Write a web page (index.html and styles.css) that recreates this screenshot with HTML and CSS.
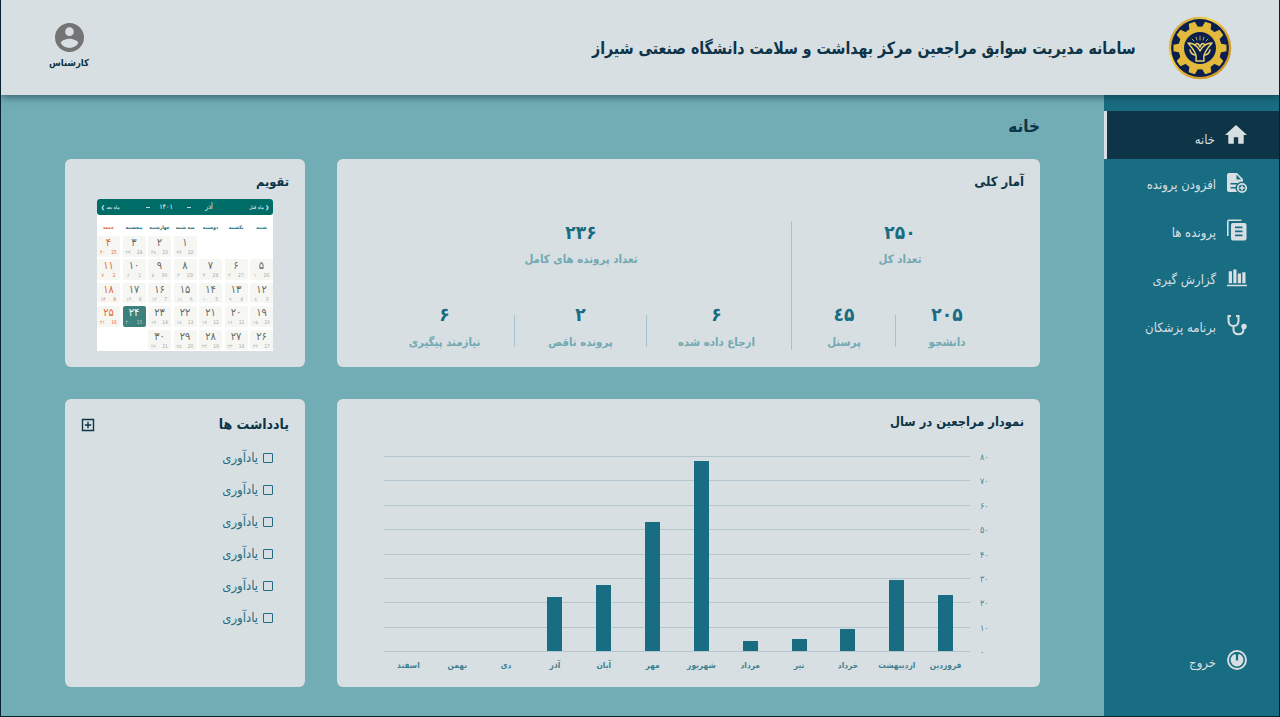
FILE: index.html
```
<!DOCTYPE html>
<html lang="fa" dir="rtl">
<head>
<meta charset="utf-8">
<title>سامانه مدیریت سوابق مراجعین</title>
<link rel="stylesheet" href="styles.css">
</head>
<body>
<div class="app">
  <header class="header">
    <div class="brand">
      <svg class="logo" viewBox="-32 -32 64 64">
        <defs>
          <linearGradient id="gold" x1="0" y1="0" x2="1" y2="1">
            <stop offset="0" stop-color="#b8862a"/><stop offset=".35" stop-color="#f2d552"/>
            <stop offset=".6" stop-color="#d9a52c"/><stop offset="1" stop-color="#c98f22"/>
          </linearGradient>
          <path id="tooth" d="M-4.6-20 L-3.2-26.5 H3.2 L4.6-20z"/>
        </defs>
        <circle r="31.3" fill="url(#gold)"/>
        <circle r="28.9" fill="#0b1f4d"/>
        <g fill="#e3b93c">
          <circle r="21.500"/>
          <use href="#tooth" transform="rotate(18)"/><use href="#tooth" transform="rotate(54)"/>
          <use href="#tooth" transform="rotate(90)"/><use href="#tooth" transform="rotate(126)"/>
          <use href="#tooth" transform="rotate(162)"/><use href="#tooth" transform="rotate(198)"/>
          <use href="#tooth" transform="rotate(234)"/><use href="#tooth" transform="rotate(270)"/>
          <use href="#tooth" transform="rotate(306)"/><use href="#tooth" transform="rotate(342)"/>
        </g>
        <circle r="16" fill="#0b1f4d"/>
        <g fill="none" stroke="#e6cf6a" stroke-width="1.500" stroke-linecap="round" stroke-linejoin="round">
          <path d="M-4 13 C-3 7-5 3-12-5 C-7-5-3-3 0 3 C3-3 7-5 12-5 C5 3 3 7 4 13z"/>
          <path d="M-10 2 C-9 6-6 7-4 7 M10 2 C9 6 6 7 4 7 M-5-3 C-3-6-1-4 0-1 C1-4 3-6 5-3"/>
          <path stroke-width=".8" d="M0-8V-12 M-3-8L-4-11 M3-8L4-11 M-6-7L-8-9 M6-7L8-9"/>
        </g>
      </svg>
      <h1 class="title"><span>سامانه مدیریت سوابق مراجعین مرکز بهداشت و سلامت دانشگاه صنعتی شیراز</span></h1>
    </div>
    <div class="user">
      <svg class="avatar" viewBox="2 2 20 20"><path fill="#747474" d="M12 2C6.48 2 2 6.48 2 12s4.48 10 10 10 10-4.48 10-10S17.52 2 12 2zm0 3c1.66 0 3 1.34 3 3s-1.34 3-3 3-3-1.34-3-3 1.34-3 3-3zm0 14.2c-2.5 0-4.71-1.28-6-3.22.03-1.99 4-3.08 6-3.08 1.99 0 5.97 1.09 6 3.08-1.29 1.94-3.5 3.22-6 3.22z"/></svg>
      <span class="user-name">کارشناس</span>
    </div>
  </header>
  <div class="body">
    <nav class="sidebar">
      <a class="item active"><svg viewBox="2 2 20 20"><path d="M10 20v-6h4v6h5v-8h3L12 3 2 12h3v8z"/></svg><span>خانه</span></a>
      <a class="item"><svg viewBox="0 0 22 22"><path fill-rule="evenodd" d="M3 1h8l6 6v13H3a2 2 0 0 1-2-2V3a2 2 0 0 1 2-2zm7.500 1.800v4.700h4.700zM4.500 11v1.500h7V11zm0 4v1.500h7V15z"/><circle cx="16" cy="16" r="6.500" fill="#196d82"/><circle cx="16" cy="16" r="4.200" fill="none" stroke="#d8dfe3" stroke-width="1.800"/><path d="M15.200 13.500h1.600v1.700h1.700v1.600h-1.700v1.700h-1.600v-1.700h-1.700v-1.600h1.700z"/></svg><span>افزودن پرونده</span></a>
      <a class="item"><svg viewBox="0 0 22 22"><path d="M1 17V2.500a2 2 0 0 1 2-2h12.500v1.600H2.600V17z"/><path fill-rule="evenodd" d="M7 4h11.500a2 2 0 0 1 2 2v13.500a2 2 0 0 1-2 2H7a2 2 0 0 1-2-2V6a2 2 0 0 1 2-2zM9 7.500v1.700h7.500V7.500zm0 4v1.700h7.500v-1.700zm0 4v1.700h7.500v-1.700z"/></svg><span>پرونده ها</span></a>
      <a class="item"><svg viewBox="0 0 22 22"><path d="M1 17.700h20v1.600H1zM2.700 4.300H6v12H2.700zM7.300 2.500h3.200v13.800H7.300zM11.800 6.500H15v9.800h-3.200zM16.300 5.300h3.200v11h-3.200z"/></svg><span>گزارش گیری</span></a>
      <a class="item"><svg viewBox="0 0 22 22"><path fill="none" stroke="#d8dfe3" stroke-width="2" d="M5 2H2.500v4.500C2.500 10 4.500 12 7.500 12s5-2 5-5.500V2H10M7.500 12v3.500c0 3 2 4.800 5 4.800s5-2 5-5V14"/><circle cx="18" cy="12.500" r="2.700"/></svg><span>برنامه پزشکان</span></a>
      <a class="item logout"><svg viewBox="0 0 22 22"><circle cx="11" cy="11" r="9" fill="none" stroke="#d8dfe3" stroke-width="1.900"/><circle cx="11" cy="11" r="6.400"/><path fill="#196d82" d="M8.800 3h4.400v2.500H8.800z"/><path fill="#196d82" d="M9.900 4h2.200v7.500H9.900z"/></svg><span>خروج</span></a>
    </nav>
    <main class="main">
      <h2 class="page-title">خانه</h2>
      <div class="grid">
        <section class="card">
          <h3>آمار کلی</h3>
          <div class="stats">
            <div class="group people">
              <div class="stat"><b>۲۵۰</b><span>تعداد کل</span></div>
              <div class="row">
                <div class="stat"><b>۲۰۵</b><span>دانشجو</span></div>
                <i></i>
                <div class="stat"><b>٤۵</b><span>پرسنل</span></div>
              </div>
            </div>
            <div class="group files">
              <div class="stat"><b>۲۳۶</b><span>تعداد پرونده های کامل</span></div>
              <div class="row">
                <div class="stat"><b>۶</b><span>ارجاع داده شده</span></div>
                <i></i>
                <div class="stat"><b>۲</b><span>پرونده ناقص</span></div>
                <i></i>
                <div class="stat"><b>۶</b><span>نیازمند پیگیری</span></div>
              </div>
            </div>
          </div>
        </section>
        <section class="card side">
          <h3 class="cal-title">تقویم</h3>
          <div class="cal">
            <div class="cal-head"><small>❮ ماه قبل</small><span>آذر</span><u></u><em>۱۴۰۱</em><u></u><small>ماه بعد ❯</small></div>
            <div class="week"><span>شنبه</span><span>یکشنبه</span><span>دوشنبه</span><span>سه شنبه</span><span>چهارشنبه</span><span>پنجشنبه</span><span class="fri">جمعه</span></div>
            <div class="days" id="days"></div>
          </div>
        </section>
        <section class="card">
          <h3 class="chart-title">نمودار مراجعین در سال</h3>
          <div class="chart">
            <div class="axis"><span>۸۰</span><span>۷۰</span><span>۶۰</span><span>۵۰</span><span>۴۰</span><span>۳۰</span><span>۲۰</span><span>۱۰</span><span>۰</span></div>
            <div class="plot" id="plot"></div>
          </div>
        </section>
        <section class="card side">
          <div class="notes-head"><h3>یادداشت ها</h3>
            <svg viewBox="0 0 14 14"><path fill="none" stroke="#0d3447" stroke-width="1.400" d="M1.500 1.500h11v11h-11zM7 3.800v6.400M3.800 7h6.400"/></svg></div>
          <ul class="notes">
            <li><i></i><span>یادآوری</span></li><li><i></i><span>یادآوری</span></li><li><i></i><span>یادآوری</span></li>
            <li><i></i><span>یادآوری</span></li><li><i></i><span>یادآوری</span></li><li><i></i><span>یادآوری</span></li>
          </ul>
        </section>
      </div>
    </main>
  </div>
</div>
<script src="app.js"></script>
</body>
</html>
```
FILE: styles.css
```
* { box-sizing: border-box; }
body { margin: 0; font-family: "DejaVu Sans Condensed", "DejaVu Sans", sans-serif; color: #0d3447; background: #06222c; }
h1, h2, h3, ul { margin: 0; padding: 0; }
.app { height: 716px; margin: 0 1px 1px; display: flex; flex-direction: column; background: #72adb6; overflow: hidden; }
.header { height: 95px; flex: none; display: flex; justify-content: space-between; background: #d8dfe3; box-shadow: 0 2px 8px rgba(0,30,40,.55); position: relative; z-index: 1; padding: 0 47px 0 48px; }
.brand { display: flex; align-items: center; gap: 32px; }
.logo { width: 64px; height: 64px; }
.title { font-size: 17px; line-height: 24px; white-space: nowrap; width: 546px; }
.title span { display: inline-block; transform: scaleX(.925); transform-origin: right center; }
.user { width: 40px; display: flex; flex-direction: column; align-items: center; padding-top: 23px; }
.avatar { width: 29px; height: 29px; }
.user-name { font-size: 9.500px; font-weight: bold; line-height: 14px; margin-top: 4px; white-space: nowrap; }
.body { flex: 1; display: flex; }
.sidebar { width: 175px; flex: none; background: #196d82; padding: 16px 0 32px; display: flex; flex-direction: column; }
.item { height: 47.500px; display: flex; align-items: center; gap: 10px; padding-right: 31px; color: #d8dfe3; font-size: 13px; white-space: nowrap; }
.item svg { width: 22px; height: 22px; fill: #d8dfe3; }
.item span { padding-top: 4px; }
.active { height: 48px; background: #0d3447; border-left: 3px solid #d8dfe3; padding-right: 32px; }
.active svg { margin-top: -1px; }
.active span { padding-top: 8px; }
.logout { margin-top: auto; }
.main { flex: 1; padding: 19px 64px 0; }
.page-title { font-size: 17px; line-height: 24px; height: 45px; }
.grid { display: grid; grid-template-columns: 703px 240px; grid-template-rows: 208px 288px; gap: 32px; }
.card { background: #d8dfe3; border-radius: 6px; padding: 13px 16px 0; }
h3 { font-size: 13px; line-height: 20px; }
.cal-title { font-size: 12.700px; }
.chart-title { font-size: 12.800px; }
.notes-head h3 { font-size: 14px; }
.stats { display: flex; margin-top: 29px; padding: 0 17px; }
.group { height: 129px; display: flex; flex-direction: column; justify-content: space-between; }
.people { width: 216px; flex: none; border-left: 1px solid #a5c3cc; }
.files { flex: 1; }
.people > .stat { margin-left: 1px; }
.stat { display: flex; flex-direction: column; align-items: center; white-space: nowrap; }
.stat b { font-size: 19px; line-height: 22px; color: #196d82; }
.stat span { font-size: 11.400px; line-height: 16px; margin-top: 9px; color: #72a9b2; font-weight: bold; }
.group > .stat span { margin-top: 8px; }
.row { display: flex; align-items: flex-end; }
.row i { width: 1px; height: 32px; background: #a5c3cc; margin-bottom: 3px; flex: none; }
.people .row { padding-right: 9px; }
.people .row .stat { width: 102px; }
.files .row { padding-right: 5px; }
.files .row .stat { width: 139px; }
.files .row .stat:nth-child(3) { width: 131px; }
.files > .stat { width: 420px; }
.cal { width: 176px; height: 152px; background: #fff; margin: 7px auto 0; border-radius: 3px 3px 0 0; }
.cal-head { height: 16px; background: #006c68; color: #fff; border-radius: 3px; display: grid; grid-template-columns: 48px 24px 17px 28px 8px 43px; padding: 0 4px; align-items: center; justify-items: center; font-size: 7px; white-space: nowrap; }
.cal-head small { font-size: 5px; justify-self: start; }
.cal-head small:last-child { justify-self: end; }
.cal-head u { width: 4px; height: 1px; background: #bcdcda; }
.cal-head em { font-style: normal; }
.week { height: 21px; display: grid; grid-template-columns: repeat(7, 23px); gap: 2.500px; align-items: center; text-align: center; font-size: 4.800px; color: #176c74; font-weight: bold; white-space: nowrap; padding-top: 3px; }
.days { display: grid; grid-template-columns: repeat(7, 23px); grid-auto-rows: 20.500px; gap: 2.900px 2.500px; }
.day { background: #f6f7f3; border-radius: 2px; color: #666b68; text-align: center; font-size: 11px; line-height: 14px; }
.day small { display: flex; direction: ltr; justify-content: space-around; font-size: 5px; line-height: 5px; color: #a5a9a5; }
.fri, .fri small { color: #e56a39; }
.today { background: #3d817d; color: #fff; }
.today small { color: #b5d3ce; }
.chart { display: flex; margin-top: 24px; padding-right: 33px; }
.axis { width: 21px; height: 219px; display: flex; flex-direction: column; justify-content: space-between; font-size: 9px; line-height: 24px; margin-top: -11px; color: #3f8593; text-align: left; direction: ltr; padding-left: 10px; }
.plot { width: 586px; height: 196px; display: grid; grid-template-columns: repeat(12, 1fr); background: repeating-linear-gradient(#b4c7d0 0 1px, transparent 1px 24.400px); }
.month { display: flex; flex-direction: column; align-items: center; justify-content: flex-end; height: 223px; }
.month i { width: 15px; background: #196d82; flex: none; }
.month span { height: 28px; line-height: 28px; font-size: 8.300px; font-weight: bold; color: #3f8090; white-space: nowrap; flex: none; }
.notes-head { display: flex; justify-content: space-between; align-items: center; padding-top: 2px; }
.notes-head svg { width: 14px; height: 14px; margin-top: 1px; }
.notes { list-style: none; padding: 7px 16px 0 0; }
.notes li { height: 32px; display: flex; align-items: center; gap: 5px; font-size: 13px; color: #1c6e83; }
.notes i { width: 10px; height: 10px; border: 1px solid #1c6e83; border-radius: 1px; margin-top: 2px; }
```
FILE: app.js
```
const fa = n => String(n).replace(/\d/g, d => '۰۱۲۳۴۵۶۷۸۹'[d]);

const days = document.getElementById('days');
for (let d = 1; d <= 30; d++) {
  const hijri = d <= 4 ? d + 26 : d - 4;
  const gregorian = d <= 9 ? d + 21 : d - 9;
  const el = document.createElement('div');
  const friday = (d + 2) % 7 === 6;
  el.className = 'day' + (friday ? ' fri' : '') + (d === 24 ? ' today' : '');
  if (d === 1) el.style.gridColumnStart = 4;
  el.innerHTML = `${fa(d)}<small><span>${fa(hijri)}</span><span>${gregorian}</span></small>`;
  days.append(el);
}

const visits = [['فروردین', 23], ['اردیبهشت', 29], ['خرداد', 9], ['تیر', 5], ['مرداد', 4], ['شهریور', 78],
  ['مهر', 53], ['آبان', 27], ['آذر', 22], ['دی', 0], ['بهمن', 0], ['اسفند', 0]];
const plot = document.getElementById('plot');
for (const [name, value] of visits) {
  const el = document.createElement('div');
  el.className = 'month';
  el.innerHTML = `<i style="height:${value * 2.44}px"></i><span>${name}</span>`;
  plot.append(el);
}
```
